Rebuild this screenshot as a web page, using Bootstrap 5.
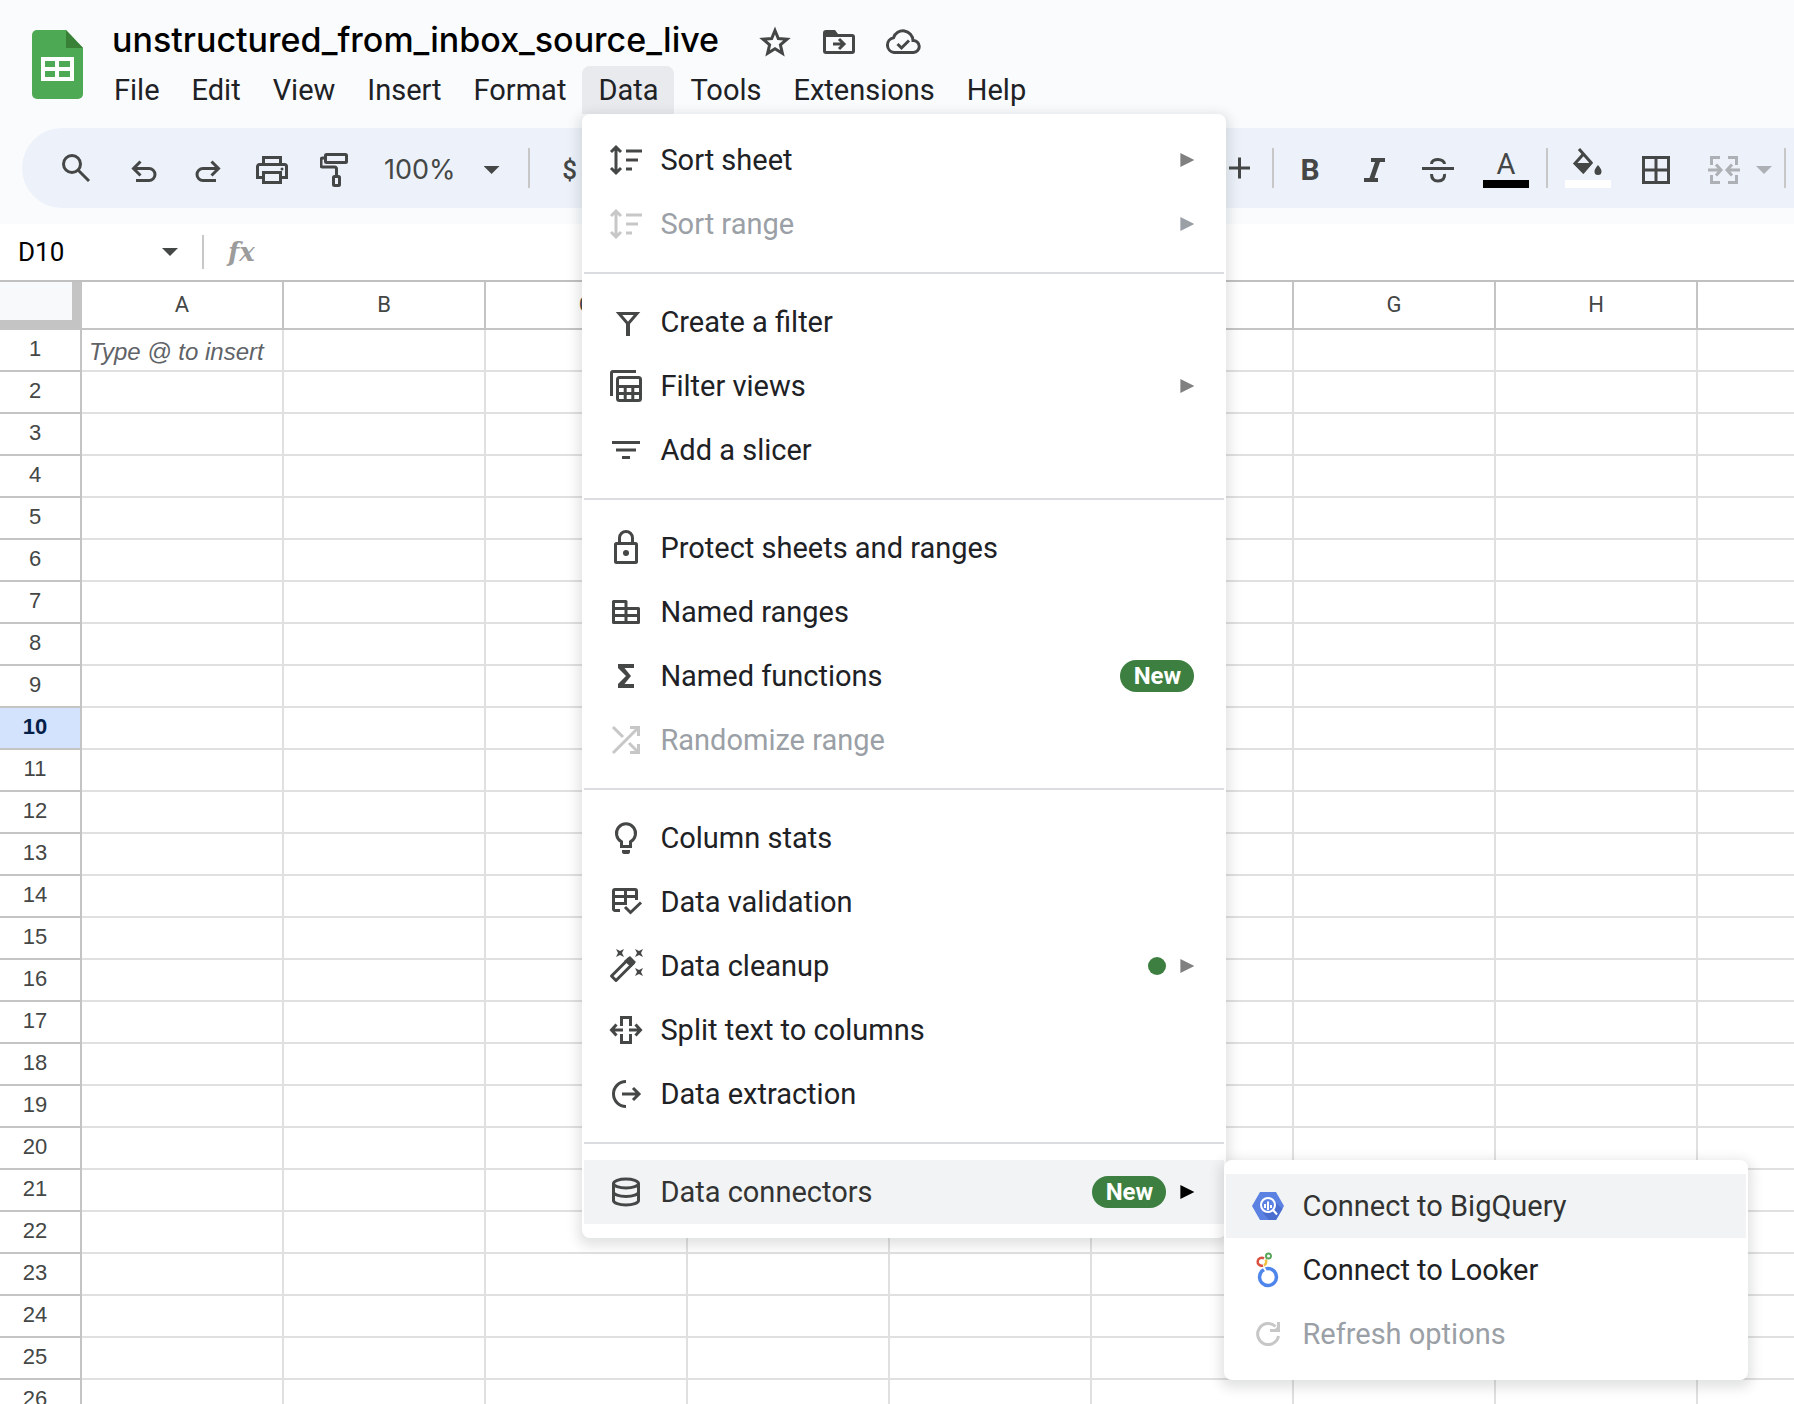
<!DOCTYPE html>
<html lang="en">
<head>
<meta charset="utf-8">
<meta name="viewport" content="width=device-width, initial-scale=1">
<title>unstructured_from_inbox_source_live</title>
<link href="https://cdn.jsdelivr.net/npm/bootstrap@5.3.0/dist/css/bootstrap.min.css" rel="stylesheet">
<style>
  body { font-family: Roboto, "Liberation Sans", sans-serif; font-size: 29px; line-height: 32px; color: #202124; background: #fff; }
  svg { display: block; flex: none; }
  .ln { fill: none; stroke: currentColor; stroke-width: 3; }
  .btn-plain { border: 0; background: none; padding: 0; color: #444746; }
  .app-head { background: #f9fbfd; }
  .logo { margin: 30px 14px 0 32px; }
  .title-row { height: 66px; padding: 14px 0 0 14px; }
  .doc-title { font-family: Inter, sans-serif; font-size: 34px; line-height: 44px; color: #000; }
  .menu-bar > li > .btn-plain { height: 48px; padding: 0 16px; color: #202124; border-radius: 8px 8px 0 0; }
  .menu-bar > li > .btn-plain.open { background: #e9eaee; }

  .tool-bar { height: 80px; margin: 14px 0 0 22px; padding-left: 22px; padding-right: 8px; background: #edf2fa; border-radius: 40px 0 0 40px; color: #444746; }
  .tool { width: 64px; height: 64px; display: flex; align-items: center; justify-content: center; flex: none; }
  .low { padding-top: 4px; }
  .tool-sep { width: 2px; height: 40px; background: #c7c7c7; flex: none; }
  .swatch-tool { flex-direction: column; }
  .swatch { width: 46px; height: 8px; }
  .bold-glyph { font-size: 30px; font-weight: 700; }
  .currency { font-size: 26px; font-weight: 500; }
  .zoom-box { font-family: Inter, sans-serif; font-size: 27px; gap: 28px; padding: 4px 28px 0 16px; }
  .caret { width: 16px; height: 8px; background: currentColor; clip-path: polygon(0 0, 100% 0, 50% 100%); }
  .is-off { color: #adb0b4; }

  .name-box { width: 140px; border: 0; outline: 0; padding: 0; font-size: 26px; color: #000; background: none; }
  .formula-row { height: 56px; background: #fff; color: #444746; }
  .formula-sep { width: 2px; height: 34px; background: #c7c7c7; }
  .fx { font-family: "DejaVu Serif", serif; font-style: italic; font-weight: 700; font-size: 26px; color: #9c9c9c; }
  .formula-in { border: 0; outline: 0; background: none; }

  .sheet { table-layout: fixed; width: 1900px; border-collapse: separate; border-spacing: 0; border-top: 2px solid #c0c0c0; font-family: "Liberation Sans", Arial, sans-serif; font-size: 22px; line-height: 24px; color: #444746; }
  .sheet th, .sheet td { padding: 0; border: 0 solid #e0e0e0; border-width: 0 2px 2px 0; height: 42px; overflow: hidden; white-space: nowrap; }
  .sheet th { border-color: #c4c4c4; text-align: center; font-weight: 400; }
  .sheet thead th { height: 48px; font-family: Roboto, sans-serif; }
  .sheet tbody th { padding: 0 10px 2px 0; }
  .sheet .corner { background: #f8f9fb; box-shadow: inset -8px -8px 0 #c4c4c4; }
  .sheet .picked { background: #d3e3fd; color: #041e49; font-weight: 700; }
  .sheet .hint { font-style: italic; font-size: 24px; color: #5f6368; padding: 4px 0 0 7px; }

  .sheet-menu { border: 0; border-radius: 8px; padding: 14px 2px; margin: 0; background: #fff; box-shadow: 0 4px 12px 4px rgba(60, 64, 67, .15); font-size: 29px; color: #202124; }
  .main-menu { width: 644px; top: 100%; left: 0; }
  .sub-menu { width: 524px; top: 0; left: 100%; }
  .sheet-menu .dropdown-item { display: flex; align-items: center; height: 64px; padding: 0 30px 0 24px; color: #202124; }
  .sheet-menu .dropdown-item > svg { color: #444746; margin-right: 16px; }
  .sheet-menu .dropdown-item:disabled { color: #9aa0a6; }
  .sheet-menu .dropdown-item:disabled > svg { color: #c7c7c7; }
  .sheet-menu .dropdown-item.lit { background: #f1f3f4; color: #333; }
  .sheet-menu .dropdown-divider { margin: 16px 0; border-top: 2px solid #dadce0; opacity: 1; }
  .more { width: 14px; height: 14px; margin-left: 14px; background: #808080; clip-path: polygon(0 0, 100% 50%, 0 100%); }
  .more.dark { background: #000; }
  .more.pale { background: #9aa0a6; }
  .new-pill { width: 74px; height: 32px; padding: 0; font-size: 24px; font-weight: 700; line-height: 32px; background: #3c7f40; color: #fff; border-radius: 16px; }
  .dot { width: 18px; height: 18px; border-radius: 50%; background: #3c7f40; }
</style>
</head>
<body class="vh-100 overflow-hidden d-flex flex-column">

<header class="app-head pb-3">
  <div class="d-flex">
    <svg class="logo" width="52" height="70" viewBox="0 0 52 70" role="img" aria-label="Sheets">
      <path fill="#4ea955" d="M5 0h29l17 18v46a5 5 0 0 1-5 5H5a5 5 0 0 1-5-5V5a5 5 0 0 1 5-5z"/>
      <path fill="#3a8138" d="M34 0l17 18H34z"/>
      <path fill="#fff" fill-rule="evenodd" d="M9 27h33v24H9zM13 31v6h10v-6zM27 31v6h11v-6zM13 41v6h10v-6zM27 41v6h11v-6z"/>
    </svg>
    <div>
      <div class="title-row d-flex align-items-center">
        <h1 class="doc-title m-0">unstructured_from_inbox_source_live</h1>
        <button class="btn-plain tool low ms-4" aria-label="Star"><svg width="32" height="32" viewBox="0 0 32 32"><path class="ln" d="M16 4.500l3.300 8 8.700.700-6.600 5.600 2 8.500L16 22.800l-7.400 4.500 2-8.500L4 13.200l8.700-.700z"/></svg></button>
        <button class="btn-plain tool low" aria-label="Move"><svg width="32" height="32" viewBox="0 0 32 32"><path fill="currentColor" d="M3 4h9l3 4h14a3 3 0 0 1 3 3v14a3 3 0 0 1-3 3H3a3 3 0 0 1-3-3V7a3 3 0 0 1 3-3z"/><path fill="#f9fbfd" d="M3 11h26v14H3z"/><path class="ln" d="M10 18h10M16 13l5 5-5 5"/></svg></button>
        <button class="btn-plain tool low" aria-label="Saved"><svg width="36" height="32" viewBox="0 0 36 32"><path class="ln" d="M9 26.500a7.500 7.500 0 0 1-.500-14.800A10 10 0 0 1 28 14.500 6 6 0 0 1 28.500 26.500z"/><path class="ln" d="M12.500 18l4 4 7.500-7.500"/></svg></button>
      </div>
      <ul class="menu-bar list-unstyled d-flex m-0">
        <li><button class="btn-plain">File</button></li>
        <li><button class="btn-plain">Edit</button></li>
        <li><button class="btn-plain">View</button></li>
        <li><button class="btn-plain">Insert</button></li>
        <li><button class="btn-plain">Format</button></li>
        <li class="dropdown">
          <button class="btn-plain open" aria-expanded="true">Data</button>
          <div class="dropdown-menu sheet-menu main-menu show">
            <button class="dropdown-item"><svg width="36" height="36"><path class="ln" d="M8 6v24M3 10l5-5 5 5M3 26l5 5 5-5M18 9h16M18 18h12M18 27h6"/></svg>Sort sheet<span class="more ms-auto"></span></button>
            <button class="dropdown-item" disabled><svg width="36" height="36"><path class="ln" d="M8 6v24M3 10l5-5 5 5M3 26l5 5 5-5M18 9h16M18 18h12M18 27h6"/></svg>Sort range<span class="more pale ms-auto"></span></button>
            <hr class="dropdown-divider">
            <button class="dropdown-item"><svg width="36" height="36"><path class="ln" d="M11 9.500h18L20 20z"/><path fill="currentColor" d="M18 18h4v14h-4z"/></svg>Create a filter</button>
            <button class="dropdown-item"><svg width="36" height="36"><path class="ln" d="M3.500 28V5a1.500 1.500 0 0 1 1.500-1.500h23"/><rect class="ln" x="9.500" y="9.500" width="23" height="23" rx="2"/><path class="ln" d="M9 18.500h24M9 25.500h24M17.200 18v15M24.800 18v15"/></svg>Filter views<span class="more ms-auto"></span></button>
            <button class="dropdown-item"><svg width="36" height="36"><path class="ln" d="M4 10.500h28M8 18h20M14 25.500h8"/></svg>Add a slicer</button>
            <hr class="dropdown-divider">
            <button class="dropdown-item"><svg width="36" height="36"><rect class="ln" x="7.500" y="13.500" width="21" height="19" rx="1"/><path class="ln" d="M11.500 13V8a6.500 6.500 0 0 1 13 0v5"/><circle cx="18" cy="23" r="3" fill="currentColor"/></svg>Protect sheets and ranges</button>
            <button class="dropdown-item"><svg width="36" height="36"><path class="ln" stroke-linejoin="round" d="M5.500 7.500h12.500v7h12.500v14h-25zM5.500 14.500H18M5.500 21.500h25M18 14v14"/></svg>Named ranges</button>
            <button class="dropdown-item"><svg width="36" height="36"><path fill="currentColor" d="M10 6h16v4h-9.500l6.500 8-6.500 8h9.500v4H10v-4l8-8-8-8z"/></svg>Named functions<span class="badge new-pill ms-auto">New</span></button>
            <button class="dropdown-item" disabled><svg width="36" height="36"><path class="ln" d="M5 31L30 6M5 5l10 10M21 21l9 9M22 5.500h8.500V14M30.500 22v8.500H22"/></svg>Randomize range</button>
            <hr class="dropdown-divider">
            <button class="dropdown-item"><svg width="36" height="36"><path class="ln" d="M13.500 26.500v-4.800a9.500 9.500 0 1 1 9 0v4.800z"/><path fill="currentColor" d="M14 30h8v2a2 2 0 0 1-2 2h-4a2 2 0 0 1-2-2z"/></svg>Column stats</button>
            <button class="dropdown-item"><svg width="36" height="36"><path class="ln" d="M12 26.500H7a1.500 1.500 0 0 1-1.500-1.500V7A1.500 1.500 0 0 1 7 5.500h20A1.500 1.500 0 0 1 28.500 7v9M5.500 12.500h23M5.500 19.500h12v-14M17 23l5.500 5.500L33 18.500"/></svg>Data validation</button>
            <button class="dropdown-item"><svg width="36" height="36"><path class="ln" stroke-linejoin="round" d="M3.500 28L21 10.500l4.500 4.500L8 32.500z"/><path fill="currentColor" d="M22 8l6 6-5 5-7-6zM8 1l4 2 4-2-2 4 2 4-4-2-4 2 2-4zM27 1l4 2 4-2-2 4 2 4-4-2-4 2 2-4zM27 20l4 2 4-2-2 4 2 4-4-2-4 2 2-4z"/></svg>Data cleanup<span class="dot ms-auto"></span><span class="more"></span></button>
            <button class="dropdown-item"><svg width="36" height="36"><path class="ln" d="M13.500 14V5.500h9V14M13.500 22v8.500h9V22M4 18h11M21 18h11M8.500 12.500L3.500 18l5 5.500M27.500 12.500l5 5.500-5 5.500"/></svg>Split text to columns</button>
            <button class="dropdown-item"><svg width="36" height="36"><path class="ln" d="M18 5.500a12.500 12.500 0 0 0 0 25M14 18h16M25 12l6 6-6 6"/></svg>Data extraction</button>
            <hr class="dropdown-divider">
            <div class="position-relative">
              <button class="dropdown-item lit" aria-expanded="true"><svg width="36" height="36"><ellipse class="ln" cx="18" cy="9.500" rx="12.500" ry="4.500"/><path class="ln" d="M5.500 9.500v17c0 2.500 5.500 4.500 12.500 4.500s12.500-2 12.500-4.500v-17M5.500 18c0 2.500 5.500 4.500 12.500 4.500s12.500-2 12.500-4.500"/></svg>Data connectors<span class="badge new-pill ms-auto">New</span><span class="more dark"></span></button>
              <div class="dropdown-menu sheet-menu sub-menu show">
                <button class="dropdown-item lit"><svg width="36" height="36"><path fill="#5b82e3" d="M10 4h16l8 14-8 14H10L2 18z"/><path fill="#4a6ed0" d="M23 12l9.500 9-6.500 11H19l-6-7z"/><circle cx="18" cy="17" r="7" fill="#5b82e3" stroke="#fff" stroke-width="2"/><path stroke="#fff" stroke-width="2" fill="none" d="M15 16v4M18 13.500V22M21 17v3M23 22l4 4.500"/></svg>Connect to BigQuery</button>
                <button class="dropdown-item"><svg width="36" height="36" fill="none"><circle cx="18" cy="25" r="8.500" stroke="#4f86ec" stroke-width="3.500"/><path stroke="#fff" stroke-width="2" d="M12 13l4 6"/><path stroke="#d9503f" stroke-width="2.500" d="M13 13.500a4 4 0 1 1 1-7"/><path stroke="#f1bf42" stroke-width="2.500" d="M15.500 7.500c1.500 2 .5 5-1.500 6"/><circle cx="18.500" cy="4" r="2.500" stroke="#58a55c" stroke-width="2"/></svg>Connect to Looker</button>
                <button class="dropdown-item" disabled><svg width="36" height="36"><path class="ln" d="M28.500 20A10.500 10.500 0 1 1 25.500 10.500"/><path fill="currentColor" d="M30 6v10H20v-3h5l2-2V6z"/></svg>Refresh options</button>
              </div>
            </div>
          </div>
        </li>
        <li><button class="btn-plain">Tools</button></li>
        <li><button class="btn-plain">Extensions</button></li>
        <li><button class="btn-plain">Help</button></li>
      </ul>
    </div>
  </div>

  <div class="tool-bar d-flex align-items-center">
    <button class="btn-plain tool" aria-label="Search the menus"><svg width="32" height="32"><circle class="ln" cx="12" cy="12" r="8.500"/><path class="ln" d="M18 18l11 11"/></svg></button>
    <button class="btn-plain tool low ms-1" aria-label="Undo"><svg width="32" height="32"><path class="ln" d="M8 26.500h13a6 6 0 0 0 0-12H6M12.500 7.500l-7 7 7 7"/></svg></button>
    <button class="btn-plain tool low" aria-label="Redo"><svg width="32" height="32"><path class="ln" d="M24 26.500H11a6 6 0 0 1 0-12h15M19.500 7.500l7 7-7 7"/></svg></button>
    <button class="btn-plain tool low" aria-label="Print"><svg width="32" height="32"><path class="ln" d="M7.500 23.500h-6V12.500a2 2 0 0 1 2-2h25a2 2 0 0 1 2 2v11h-6M7.500 10V3.500h17V10M7.500 18.500h17v10h-17z"/><circle cx="26" cy="15" r="1.500" fill="currentColor"/></svg></button>
    <button class="btn-plain tool low" aria-label="Paint format"><svg width="32" height="36"><rect class="ln" x="5.500" y="2.500" width="21" height="8" rx="1"/><path class="ln" d="M6 6H3a2 2 0 0 0-2 2v5.500A1.500 1.500 0 0 0 2.500 15H14.500a2 2 0 0 1 2 2v7"/><rect class="ln" x="13.500" y="24.500" width="6" height="9" rx="1"/></svg></button>
    <button class="btn-plain zoom-box d-flex align-items-center" aria-label="Zoom">100%<span class="caret"></span></button>
    <span class="tool-sep"></span>
    <button class="btn-plain tool low currency ms-2" aria-label="Format as currency">$</button>

    <button class="btn-plain tool ms-auto" aria-label="Increase font size"><svg width="32" height="32"><path class="ln" d="M5 16h21M15.500 5.500v21"/></svg></button>
    <span class="tool-sep"></span>
    <button class="btn-plain tool low bold-glyph ms-1" aria-label="Bold">B</button>
    <button class="btn-plain tool low" aria-label="Italic"><svg width="32" height="32"><path fill="currentColor" d="M13 4h14v4h-5l-5.500 16H20v4H6v-4h5.500L17 8h-4z"/></svg></button>
    <button class="btn-plain tool low" aria-label="Strikethrough"><svg width="32" height="32"><path class="ln" d="M0 14.500h32M9.500 10c0-3 3-4.500 6.500-4.500s6.500 2 6.500 4.500M9.500 20c0 5 3 7 6.500 7 5 0 7-3 6.500-7"/></svg></button>
    <button class="btn-plain tool swatch-tool ms-1" aria-label="Text colour"><span>A</span><span class="swatch bg-black"></span></button>
    <span class="tool-sep ms-2"></span>
    <button class="btn-plain tool swatch-tool ms-2" aria-label="Fill colour"><svg width="32" height="32"><path class="ln" d="M7 1l12 13.500-8 9-8-8 8-9"/><path fill="currentColor" d="M1 15h20l-9.500 11zM26 17c2.500 3 3.500 4.500 3.500 6.500a3.500 3.500 0 0 1-7 0c0-2 1-3.500 3.500-6.500z"/></svg><span class="swatch bg-white"></span></button>
    <button class="btn-plain tool low ms-1" aria-label="Borders"><svg width="32" height="32"><path class="ln" d="M3.500 3.500h25v25h-25zM16 3v26M3 16h26"/></svg></button>
    <button class="btn-plain tool low is-off ms-1" disabled aria-label="Merge cells"><svg width="32" height="32"><path class="ln" d="M3.500 11V3.500H12M20 3.500h8.500V11M3.500 21v7.500H12M20 28.500h8.500V21M0 16h11M21 16h11M8 10.500l5 5.500-5 5.500M24 10.500L19 16l5 5.500"/></svg></button>
    <span class="low"><span class="caret is-off d-block"></span></span>
    <span class="tool-sep" style="margin-left:12px"></span>
  </div>
</header>

<div class="formula-row d-flex align-items-center flex-shrink-0">
  <input class="name-box" style="margin-left:18px" value="D10" aria-label="Name box">
  <span class="caret ms-1"></span>
  <span class="formula-sep ms-4"></span>
  <label class="fx ms-4" for="formula">fx</label>
  <input id="formula" class="formula-in flex-grow-1">
</div>

<main class="flex-grow-1 overflow-hidden">
  <table class="sheet">
    <colgroup><col style="width:82px"><col span="9"></colgroup>
    <thead>
      <tr><th class="corner"></th><th>A</th><th>B</th><th>C</th><th>D</th><th>E</th><th>F</th><th>G</th><th>H</th><th>I</th></tr>
    </thead>
    <tbody id="rows"></tbody>
  </table>
</main>

<script src="https://cdn.jsdelivr.net/npm/bootstrap@5.3.0/dist/js/bootstrap.bundle.min.js"></script>
<script>
  const body = document.getElementById('rows');
  for (let r = 1; r <= 26; r++) {
    const tr = body.insertRow();
    const head = document.createElement('th');
    head.textContent = r;
    if (r === 10) head.className = 'picked';
    tr.append(head);
    for (let c = 0; c < 9; c++) {
      const td = tr.insertCell();
      if (r === 1 && c === 0) { td.textContent = 'Type @ to insert'; td.className = 'hint'; }
    }
  }
</script>
</body>
</html>
